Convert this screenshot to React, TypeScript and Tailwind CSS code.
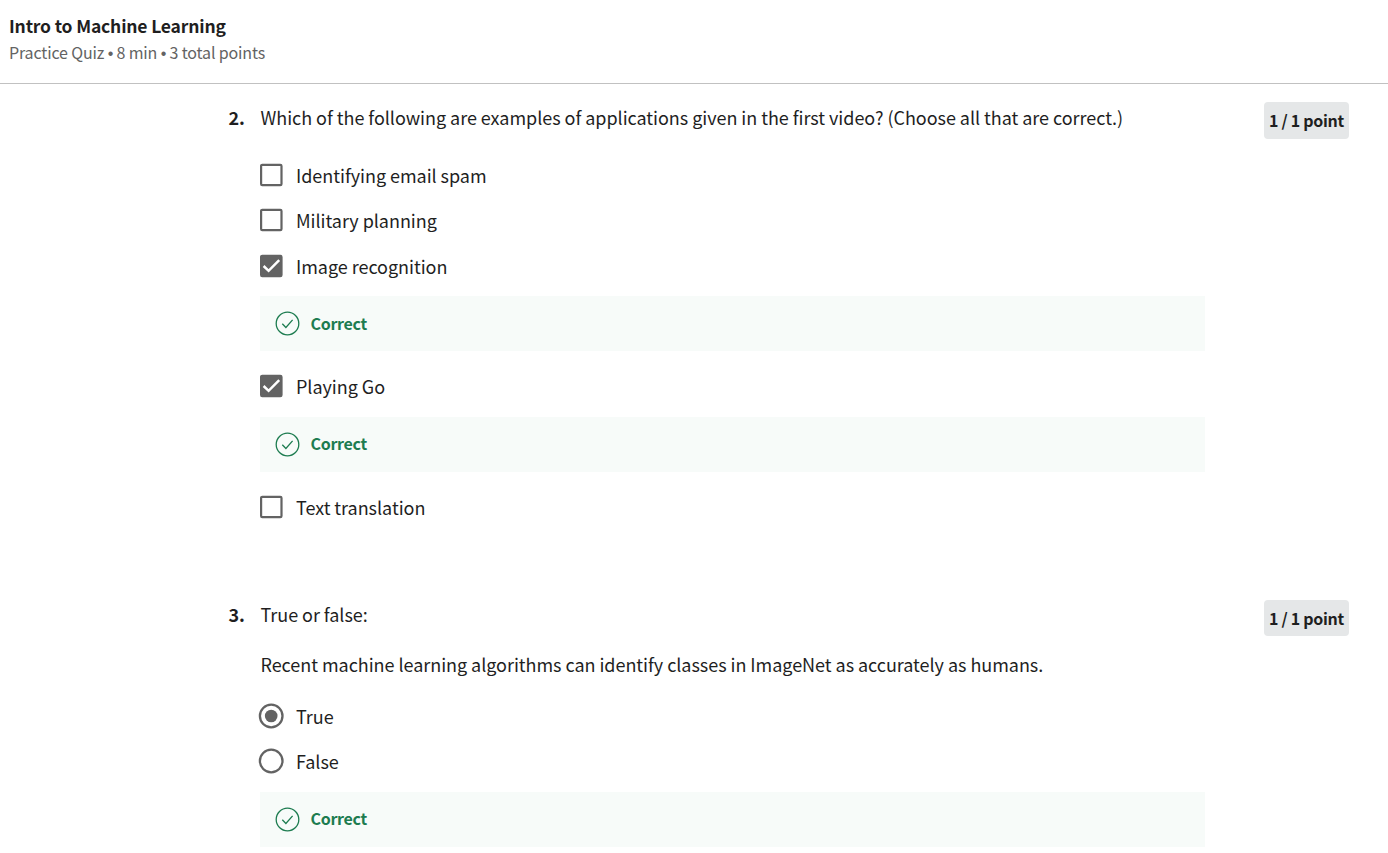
import React from "react";

function Badge({ className = "h-[37px] pb-px" }: { className?: string }) {
  return (
    <div className={`flex w-[85px] shrink-0 items-center justify-center rounded bg-[#e5e7e8] text-[16px] font-bold tracking-[-0.3px] whitespace-nowrap ${className}`}>
      1 / 1 point
    </div>
  );
}

function Correct({ labelClass = "pb-[4px]" }: { labelClass?: string }) {
  return (
    <div className="flex h-[55px] w-[945px] items-center bg-[#f7fbf9] pl-[15px] text-[#1d7c50]">
      <svg width="25" height="25" viewBox="0 0 25 25" fill="none" stroke="currentColor" strokeWidth="1.3">
        <circle cx="12.5" cy="12.5" r="11.3" />
        <path d="M7.3 12.7l3.6 3.8 6.7-7.6" />
      </svg>
      <span className={`ml-[10.5px] text-[16px] leading-6 font-bold tracking-[-0.3px] ${labelClass}`}>Correct</span>
    </div>
  );
}

function Option({ label, checked = false, radio = false }: { label: string; checked?: boolean; radio?: boolean }) {
  return (
    <div className="flex h-6 items-start">
      <div className="flex w-9 shrink-0">
        {radio ? (
          <svg className="-ml-[2px]" width="26" height="26" viewBox="0 0 26 26" fill="none">
            <circle cx="13.2" cy="13" r="11.3" stroke="#636363" strokeWidth="2.3" />
            {checked && <circle cx="13.2" cy="13" r="6.3" fill="#636363" />}
          </svg>
        ) : (
          <svg width="23" height="24" viewBox="0 0 23 24" fill="none">
            <rect x="1.1" y="1.8" width="20.4" height="20.4" rx="1.2" stroke="#636363" strokeWidth="2.2" fill={checked ? "#636363" : "none"} />
            {checked && <path d="M3.6 12l5 4.8L19.2 6.2" stroke="#fff" strokeWidth="2.5" />}
          </svg>
        )}
      </div>
      <span className={radio ? "pt-px" : ""}>{label}</span>
    </div>
  );
}

const Dot = () => <span className="font-['Liberation_Sans',sans-serif]">•</span>;

export default function App() {
  return (
    <div className="h-[853px] overflow-hidden bg-white font-['Noto_Sans_CJK_SC',sans-serif] text-[18px] leading-6 tracking-[-0.04px] text-[#1f1f1f]">
      <header className="h-[84px] border-b border-[#c1c1c1] pt-[13px] pl-[9px]">
        <h1 className="text-[17.5px] leading-[26px] font-bold tracking-[-0.17px]">Intro to Machine Learning</h1>
        <p className="text-[16px] leading-[27px] tracking-[-0.15px] text-[#636363]">
          Practice Quiz <Dot /> 8 min <Dot /> 3 total points
        </p>
      </header>
      <main className="pl-[228px]">
        <section className="flex h-[498px] pt-[18px]">
          <div className="w-8 shrink-0 pt-[3px] pl-[0.5px] font-bold">2.</div>
          <div className="w-[1004px]">
            <p className="pt-[3px] pl-[0.5px]">Which of the following are examples of applications given in the first video? (Choose all that are correct.)</p>
            <div className="mt-[34px]"><Option label="Identifying email spam" /></div>
            <div className="mt-[21px]"><Option label="Military planning" /></div>
            <div className="mt-[22px] mb-[18px]"><Option label="Image recognition" checked /></div>
            <Correct labelClass="pb-[2px]" />
            <div className="mt-[23px] mb-[19px]"><Option label="Playing Go" checked /></div>
            <Correct />
            <div className="mt-[23px]"><Option label="Text translation" /></div>
          </div>
          <Badge />
        </section>
        <section className="flex pt-[18px]">
          <div className="w-8 shrink-0 pt-[2px] pl-[0.5px] font-bold">3.</div>
          <div className="w-[1004px]">
            <p className="pt-[2px] pl-[0.5px]">True or false:</p>
            <p className="mt-[26px] pl-[0.5px]">Recent machine learning algorithms can identify classes in ImageNet as accurately as humans.</p>
            <div className="mt-[27px]"><Option radio label="True" checked /></div>
            <div className="mt-[21px] mb-[20px]"><Option radio label="False" /></div>
            <Correct />
          </div>
          <Badge className="h-[36px]" />
        </section>
      </main>
    </div>
  );
}
